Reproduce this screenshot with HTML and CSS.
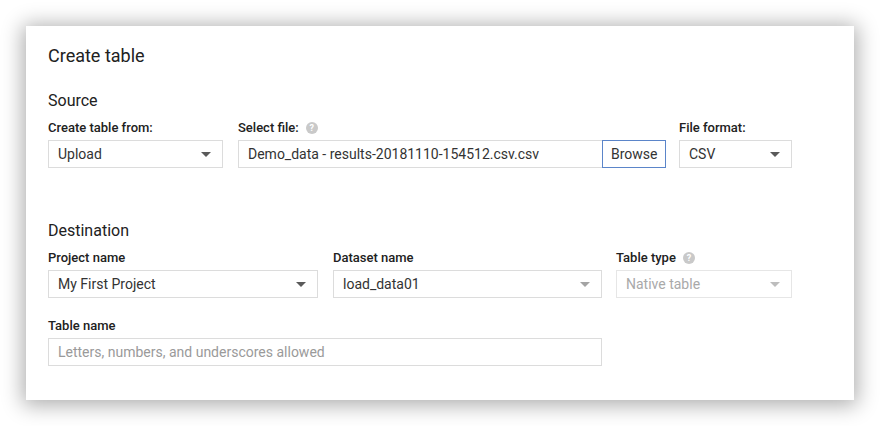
FILE: index.html
```html
<!DOCTYPE html>
<html lang="en">
<head>
<meta charset="utf-8">
<title>Create table</title>
<link rel="stylesheet" href="styles.css">
</head>
<body>
<div class="card">
  <h1 class="title">Create table</h1>

  <h2 class="section section-source">Source</h2>
  <div class="row row-source">
    <div class="field w-from">
      <div class="label">Create table from:</div>
      <div class="select"><span class="value">Upload</span><span class="arrow"></span></div>
    </div>
    <div class="field w-file">
      <div class="label">Select file: <span class="help">?</span></div>
      <div class="filebox">
        <div class="fileinput"><span class="value">Demo_data - results-20181110-154512.csv.csv</span></div>
        <div class="browse">Browse</div>
      </div>
    </div>
    <div class="field w-format">
      <div class="label">File format:</div>
      <div class="select"><span class="value">CSV</span><span class="arrow"></span></div>
    </div>
  </div>

  <h2 class="section section-dest">Destination</h2>
  <div class="row row-dest">
    <div class="field w-project">
      <div class="label">Project name</div>
      <div class="select"><span class="value">My First Project</span><span class="arrow"></span></div>
    </div>
    <div class="field w-dataset">
      <div class="label">Dataset name</div>
      <div class="select"><span class="value">load_data01</span><span class="arrow arrow-light"></span></div>
    </div>
    <div class="field w-type">
      <div class="label">Table type <span class="help">?</span></div>
      <div class="select select-disabled"><span class="value">Native table</span><span class="arrow arrow-faint"></span></div>
    </div>
  </div>

  <div class="row row-name">
    <div class="field w-name">
      <div class="label">Table name</div>
      <div class="textinput"><span class="placeholder">Letters, numbers, and underscores allowed</span></div>
    </div>
  </div>
</div>
</body>
</html>
```

FILE: styles.css
```css
* { box-sizing: border-box; }

html, body {
  margin: 0;
  padding: 0;
  background: #ffffff;
}

body {
  font-family: Roboto, "Liberation Sans", Arial, sans-serif;
  color: #212121;
  width: 880px;
  height: 426px;
  overflow: hidden;
}

.card {
  margin: 26px 0 0 26px;
  width: 828px;
  height: 374px;
  background: #ffffff;
  padding: 18px 22px 0 22px;
  box-shadow: 0 2px 20px 3px rgba(0, 0, 0, 0.33);
}

.title {
  margin: 0;
  font-size: 18px;
  line-height: 24px;
  font-weight: 400;
  color: #212121;
}

.section {
  margin: 0;
  font-size: 16px;
  line-height: 20px;
  font-weight: 400;
  color: #212121;
}

.section-source { margin-top: 23px; }
.section-dest { margin-top: 53px; }

.row {
  display: flex;
  margin-top: 9px;
}

.row-source { gap: 0; }
.row-name { margin-top: 20px; }

.w-from { width: 175px; margin-right: 15px; }
.w-file { width: 428px; margin-right: 13px; }
.w-format { width: 113px; }

.w-project { width: 270px; margin-right: 15px; }
.w-dataset { width: 269px; margin-right: 14px; }
.w-type { width: 176px; }

.w-name { width: 554px; }

.label {
  display: flex;
  align-items: center;
  height: 16px;
  font-size: 13px;
  line-height: 16px;
  font-weight: 500;
  color: #212121;
  margin-bottom: 4px;
  white-space: nowrap;
}

.help {
  display: inline-flex;
  align-items: center;
  justify-content: center;
  width: 12px;
  height: 12px;
  margin-left: 7px;
  border-radius: 50%;
  background: #c9c9c9;
  color: #ffffff;
  font-size: 9px;
  font-weight: 700;
  line-height: 12px;
}

.select,
.textinput,
.fileinput {
  display: flex;
  align-items: center;
  height: 28px;
  border: 1px solid #dcdcdc;
  background: #ffffff;
  padding: 0 10px 0 9px;
  font-size: 14px;
  color: #333333;
  white-space: nowrap;
}

.select { justify-content: space-between; }

.value { line-height: 18px; }

.arrow {
  width: 0;
  height: 0;
  border-left: 5px solid transparent;
  border-right: 5px solid transparent;
  border-top: 5px solid #5a5a5a;
  margin-right: 1px;
}

.arrow-light { border-top-color: #a4a4a4; }
.arrow-faint { border-top-color: #bdbdbd; }

.select-disabled {
  border-color: #e6e6e6;
  color: #a9a9a9;
}

.filebox {
  display: flex;
  height: 28px;
}

.fileinput {
  flex: 1;
  border-right: none;
}

.browse {
  width: 64px;
  height: 28px;
  border: 1px solid #5b85c9;
  background: #ffffff;
  font-size: 14px;
  line-height: 26px;
  color: #333333;
  padding-left: 8px;
}

.placeholder {
  color: #9a9a9a;
  line-height: 18px;
}
```
